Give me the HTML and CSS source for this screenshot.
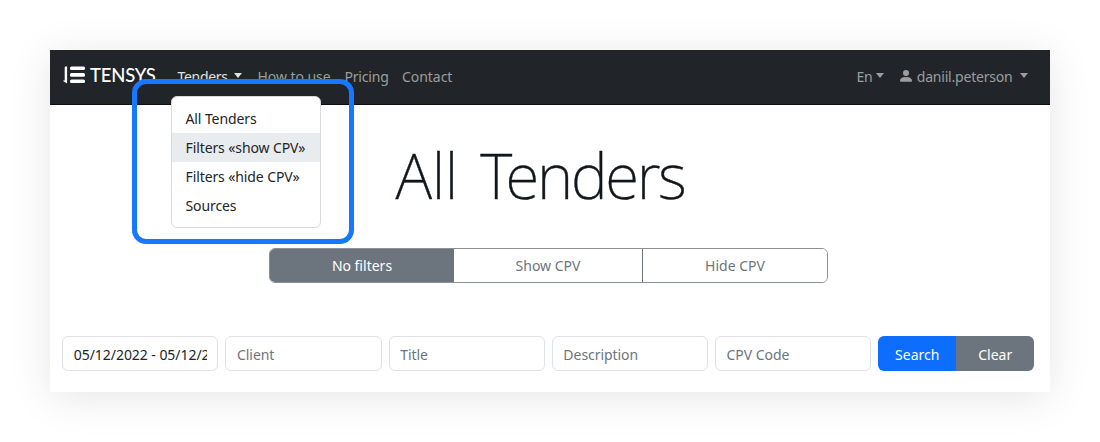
FILE: index.html
```html
<!DOCTYPE html>
<html lang="en">
<head>
<meta charset="utf-8">
<title>All Tenders</title>
<link rel="stylesheet" href="styles.css">
</head>
<body>
<div class="window">
  <header class="navbar">
    <a class="brand">
      <svg class="brand-mark" width="22" height="18" viewBox="0 0 22 18" fill="#fff"><path d="M1.700 1.400q0-.8.8-.8h1.600v16.200q0 .8-.7.3L.4 15.200q-.6-.6.200-.6h1.100z"/><rect x="7" y="0.500" width="15" height="3.600" rx="1.500"/><rect x="7" y="7" width="15" height="3.700" rx="1.500"/><rect x="7" y="13.500" width="15" height="3.600" rx="1.500"/></svg>
      <span class="brand-name">TENSYS</span>
    </a>
    <nav class="nav">
      <div class="nav-item tenders">
        <a class="nav-link active">Tenders</a><i class="caret"></i>
        <div class="menu">
          <a class="menu-item">All Tenders</a>
          <a class="menu-item current">Filters «show CPV»</a>
          <a class="menu-item">Filters «hide CPV»</a>
          <a class="menu-item">Sources</a>
        </div>
      </div>
      <a class="nav-link how">How to use</a>
      <a class="nav-link pricing">Pricing</a>
      <a class="nav-link contact">Contact</a>
    </nav>
    <div class="account">
      <a class="nav-link lang">En</a><i class="caret"></i>
      <svg class="user" width="12" height="12" viewBox="0 0 12 12" fill="currentColor"><circle cx="6" cy="3" r="3"/><path d="M0 11.100C0 8.400 2 7 6 7s6 1.400 6 4.100q0 .6-.8.6H.8Q0 11.700 0 11.100z"/></svg>
      <a class="nav-link name">daniil.peterson</a><i class="caret"></i>
    </div>
  </header>
  <h1 class="title"><span class="title-lead">All</span> <span class="title-main">Tenders</span></h1>
  <div class="filters">
    <button class="filter selected">No filters</button>
    <button class="filter">Show CPV</button>
    <button class="filter">Hide CPV</button>
  </div>
  <form class="search">
    <div class="field value"><span>05/12/2022 - 05/12/2022</span></div>
    <div class="field"><span>Client</span></div>
    <div class="field"><span>Title</span></div>
    <div class="field"><span>Description</span></div>
    <div class="field"><span>CPV Code</span></div>
    <div class="actions">
      <button class="btn primary" type="button">Search</button>
      <button class="btn secondary" type="button">Clear</button>
    </div>
  </form>
  <div class="highlight"></div>
</div>
</body>
</html>
```
FILE: styles.css
```css
* { box-sizing: border-box; }
body {
  margin: 0;
  padding: 50px;
  height: 442px;
  overflow: hidden;
  background: #fff;
  font: 14px/21px "Noto Sans", "Open Sans", sans-serif;
  letter-spacing: -.05px;
  color: #212529;
}
.window {
  position: relative;
  display: flex;
  flex-direction: column;
  height: 342px;
  background: #fff;
  box-shadow: 0 5px 40px rgba(0, 0, 0, .1);
}
.navbar {
  display: flex;
  align-items: center;
  height: 55px;
  padding: 0 22px 2px 13px;
  background: #212529;
  border-bottom: 1px solid #0a0e12;
  color: #9b9d9f;
}
.brand { display: flex; align-items: center; width: 114.500px; color: #fff; }
.brand-mark { margin: -3px 5px 0 0; }
.brand-name { font: 500 18.500px/22px Lato, sans-serif; letter-spacing: -.2px; margin-top: -2px; }
.nav { display: flex; }
.nav-item { position: relative; display: flex; align-items: center; }
.nav-link { white-space: nowrap; }
.active { color: #e0e1e2; letter-spacing: -.3px; }
.tenders { width: 80px; color: #e0e1e2; }
.how { width: 87px; }
.pricing { width: 57.500px; letter-spacing: -.2px; }
.caret {
  width: 0;
  border: 4.500px solid transparent;
  border-top: 5px solid currentColor;
  border-bottom: 0;
  margin: -1px 0 0 6px;
}
.account { display: flex; align-items: center; margin-left: auto; }
.lang + .caret { margin-left: 3px; }
.name { letter-spacing: -.2px; }
.name + .caret { margin-left: 7.500px; }
.user { margin: 0 5px 0 16px; }
.menu {
  position: absolute;
  z-index: 1;
  left: -7px;
  top: 30px;
  width: 150px;
  height: 132px;
  padding: 7px 0;
  background: #fff;
  border: 1px solid #d9dadb;
  border-radius: 6px;
  color: #212529;
  letter-spacing: -.1px;
}
.menu-item { display: block; height: 29px; padding: 4px 14px; white-space: nowrap; }
.current { background: #e9ecef; }
.title {
  display: flex;
  justify-content: center;
  gap: 22.500px;
  margin: 32px 0 0;
  padding-right: 20px;
  font: 200 62px/76px "Noto Sans", "Open Sans", sans-serif;
  color: #10161b;
  -webkit-text-stroke: .4px #10161b;
}
.title-lead { letter-spacing: -.4px; }
.title-main { letter-spacing: -2.300px; }
.filters {
  display: grid;
  grid-template-columns: 183px 189px 185px;
  width: 559px;
  height: 35px;
  margin: 35px 0 0 219px;
  border: 1px solid #8b9197;
  border-radius: 6px;
  overflow: hidden;
}
.filter {
  padding: 0;
  border: 0;
  border-left: 1px solid #6c757d;
  background: #fff;
  color: #6c757d;
  font: inherit;
}
.selected { background: #6c757d; color: #fff; }
.search { display: flex; gap: 7px; margin: 53px 0 0 12.300px; }
.field {
  width: 156.200px;
  height: 35px;
  padding: 7px 10.500px;
  border: 1px solid #dee2e6;
  border-radius: 6px;
  color: #6c757d;
}
.field span { display: block; overflow: hidden; white-space: nowrap; }
.value { color: #212529; }
.actions { display: flex; width: 156px; border-radius: 6px; overflow: hidden; }
.btn { flex: 1; padding: 1px 0 0; border: 0; color: #fff; font: inherit; }
.primary { background: #0d6efd; }
.secondary { background: #6c757d; }
.highlight {
  position: absolute;
  z-index: 2;
  left: 82px;
  top: 29px;
  width: 222px;
  height: 165px;
  border: 5px solid #1877ff;
  border-radius: 14px;
}
```
